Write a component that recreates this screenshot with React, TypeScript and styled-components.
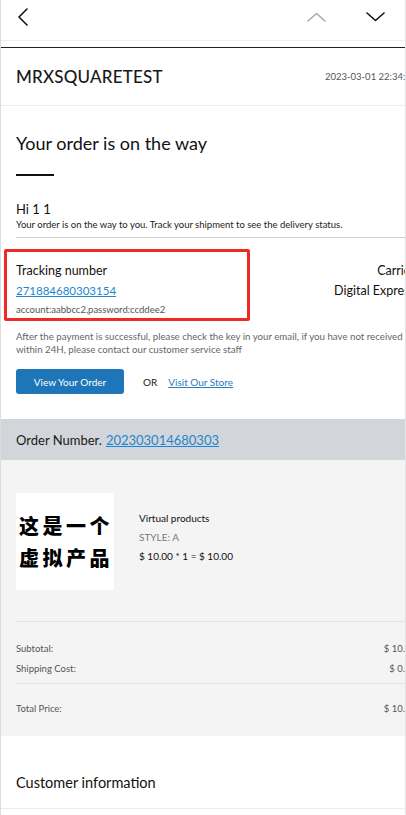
import React from "react";
import styled, { createGlobalStyle } from "styled-components";

const Global = createGlobalStyle`
  html, body { margin: 0; padding: 0; background: #fff; }
  body { font-family: Lato, "Noto Sans", sans-serif; color: #111; }
  * { box-sizing: border-box; }
`;

const Frame = styled.div`
  position: relative;
  width: 406px;
  height: 815px;
  overflow: hidden;
  background: #fff;
  border-left: 1px solid #dcdcdc;
  border-right: 1px solid #e4e4e4;
`;

const TopBar = styled.div`
  height: 41px;
  display: flex;
  align-items: center;
  padding: 0 20px 6px 16px;
  border-bottom: 1px solid #efefef;
`;

const NavGroup = styled.div`
  margin-left: auto;
  display: flex;
  align-items: center;
  gap: 40px;
`;

const Mail = styled.div`
  width: 429px;
  margin-top: 6px;
  border-top: 1px solid #222;
`;

const BrandRow = styled.div`
  height: 58px;
  display: flex;
  align-items: center;
  justify-content: space-between;
  padding: 0 0 0 15px;
  border-bottom: 1px solid #ececec;
`;

const Brand = styled.div`
  font-size: 17px;
  font-weight: 500;
  letter-spacing: 0.2px;
  color: #1a1a1a;
`;

const DateText = styled.div`
  font-size: 9.5px;
  color: #555;
  width: 105px;
  white-space: nowrap;
`;

const Section = styled.div<{ $pt?: number; $pb?: number }>`
  padding: ${(p) => p.$pt ?? 0}px 15px ${(p) => p.$pb ?? 0}px 15px;
`;

const Title = styled.h1`
  margin: 0;
  font-size: 18px;
  font-weight: 400;
  line-height: 24px;
  color: #111;
`;

const Bar = styled.div`
  width: 38px;
  height: 2px;
  background: #111;
  margin-top: 19px;
`;

const Hi = styled.div`
  margin-top: 25px;
  font-size: 13px;
  line-height: 16px;
  color: #111;
`;

const Small = styled.div<{ $color?: string; $mt?: number }>`
  font-size: 9.5px;
  line-height: 13px;
  color: ${(p) => p.$color ?? "#222"};
  margin-top: ${(p) => p.$mt ?? 0}px;
`;

const Para = styled.div`
  font-size: 9.7px;
  line-height: 13px;
  color: #666;
  margin-top: 14px;
`;

const Rule = styled.div<{ $color?: string; $mt?: number }>`
  height: 1px;
  background: ${(p) => p.$color ?? "#cfcfcf"};
  margin-top: ${(p) => p.$mt ?? 0}px;
`;

const TrackRow = styled.div`
  display: flex;
  justify-content: space-between;
  margin-top: 23px;
`;

const Col = styled.div<{ $right?: boolean }>`
  display: flex;
  flex-direction: column;
  align-items: ${(p) => (p.$right ? "flex-end" : "flex-start")};
`;

const Label = styled.div`
  font-size: 12.5px;
  line-height: 20px;
  color: #111;
  white-space: nowrap;
`;

const Link = styled.a<{ $size?: number }>`
  font-size: ${(p) => p.$size ?? 12.5}px;
  line-height: 20px;
  color: #1c87cf;
  text-decoration: underline;
`;

const Actions = styled.div`
  display: flex;
  align-items: center;
  margin-top: 13px;
`;

const Button = styled.div`
  width: 108px;
  height: 25px;
  border-radius: 3px;
  background: #1e75b8;
  color: #fff;
  font-size: 10px;
  display: flex;
  align-items: center;
  justify-content: center;
`;

const Or = styled.span`
  font-size: 10px;
  color: #222;
  margin: 0 11px 0 19px;
`;

const StoreLink = styled.a`
  font-size: 10px;
  color: #2a7bb8;
  text-decoration: underline;
`;

const OrderBand = styled.div`
  margin-top: 25px;
  height: 41px;
  background: #d2d5d9;
  display: flex;
  align-items: center;
  padding: 0 15px;
  font-size: 13px;
  color: #1a1a1a;
  gap: 4px;
`;

const Summary = styled.div`
  background: #f4f4f4;
  height: 276px;
  padding: 33px 0 0 15px;
`;

const Product = styled.div`
  display: flex;
  align-items: center;
  gap: 25px;
`;

const Thumb = styled.div`
  width: 98px;
  height: 97px;
  background: #fff;
  display: flex;
  flex-direction: column;
  justify-content: center;
  padding-left: 3px;
  gap: 3px;
`;

const ThumbLine = styled.div`
  font-family: "Noto Sans CJK SC", sans-serif;
  font-weight: 900;
  font-size: 20px;
  line-height: 29px;
  letter-spacing: 3.5px;
  color: #000;
  white-space: nowrap;
`;

const Info = styled.div`
  display: flex;
  flex-direction: column;
  gap: 5px;
  margin-bottom: 9px;
`;

const InfoLine = styled.div<{ $color?: string }>`
  font-size: 10px;
  line-height: 14px;
  color: ${(p) => p.$color ?? "#111"};
`;

const Totals = styled.div`
  margin-top: 31px;
  border-top: 1px solid #e2e2e2;
  padding-top: 17px;
`;

const TotalRow = styled.div`
  display: flex;
  justify-content: space-between;
  padding-right: 14px;
  font-size: 9.5px;
  line-height: 20px;
  color: #555;
`;

const TotalDivider = styled.div`
  height: 1px;
  background: #e2e2e2;
  margin: 4px 0 15px;
`;

const Customer = styled.div`
  height: 73px;
  display: flex;
  align-items: flex-end;
  padding: 0 15px 17px;
  font-size: 14.5px;
  color: #111;
  border-bottom: 1px solid #ececec;
`;

const Highlight = styled.div`
  position: absolute;
  left: 3px;
  top: 249px;
  width: 246px;
  height: 72px;
  border: 3px solid #ee2a24;
  border-radius: 2px;
  pointer-events: none;
`;

const Chevron = ({ d, color, w, h }: { d: string; color: string; w: number; h: number }) => (
  <svg width={w} height={h} viewBox={`0 0 ${w} ${h}`} fill="none">
    <path d={d} stroke={color} strokeWidth={1.6} strokeLinecap="round" strokeLinejoin="round" />
  </svg>
);

export default function App() {
  return (
    <Frame>
      <Global />
      <TopBar>
        <Chevron w={12} h={18} d="M10 1 L2 9 L10 17" color="#111" />
        <NavGroup>
          <Chevron w={19} h={10} d="M1 9 L9.5 1.5 L18 9" color="#aaa" />
          <Chevron w={19} h={10} d="M1 1 L9.5 8.5 L18 1" color="#111" />
        </NavGroup>
      </TopBar>
      <Mail>
        <BrandRow>
          <Brand>MRXSQUARETEST</Brand>
          <DateText>2023-03-01 22:34:17</DateText>
        </BrandRow>
        <Section $pt={25}>
          <Title>Your order is on the way</Title>
          <Bar />
          <Hi>Hi 1 1</Hi>
          <Small $mt={1}>Your order is on the way to you. Track your shipment to see the delivery status.</Small>
          <Rule $mt={6} />
          <TrackRow>
            <Col>
              <Label>Tracking number</Label>
              <Link $size={11.5}>271884680303154</Link>
              <Small $color="#555" $mt={2}>account:aabbcc2,password:ccddee2</Small>
            </Col>
            <Col $right>
              <Label>Carrier</Label>
              <Label>Digital Express</Label>
            </Col>
          </TrackRow>
          <Para>
            After the payment is successful, please check the key in your email, if you have not received
            within 24H, please contact our customer service staff
          </Para>
          <Actions>
            <Button>View Your Order</Button>
            <Or>OR</Or>
            <StoreLink>Visit Our Store</StoreLink>
          </Actions>
        </Section>
        <OrderBand>
          <span>Order Number.</span>
          <Link $size={13}>202303014680303</Link>
        </OrderBand>
        <Summary>
          <Product>
            <Thumb>
              <ThumbLine>这是一个</ThumbLine>
              <ThumbLine>虚拟产品</ThumbLine>
            </Thumb>
            <Info>
              <InfoLine>Virtual products</InfoLine>
              <InfoLine $color="#777">STYLE: A</InfoLine>
              <InfoLine>$ 10.00 * 1 = $ 10.00</InfoLine>
            </Info>
          </Product>
          <Totals>
            <TotalRow>
              <span>Subtotal:</span>
              <span>$ 10.00</span>
            </TotalRow>
            <TotalRow>
              <span>Shipping Cost:</span>
              <span>$ 0.00</span>
            </TotalRow>
            <TotalDivider />
            <TotalRow>
              <span>Total Price:</span>
              <span>$ 10.00</span>
            </TotalRow>
          </Totals>
        </Summary>
        <Customer>Customer information</Customer>
      </Mail>
      <Highlight />
    </Frame>
  );
}
